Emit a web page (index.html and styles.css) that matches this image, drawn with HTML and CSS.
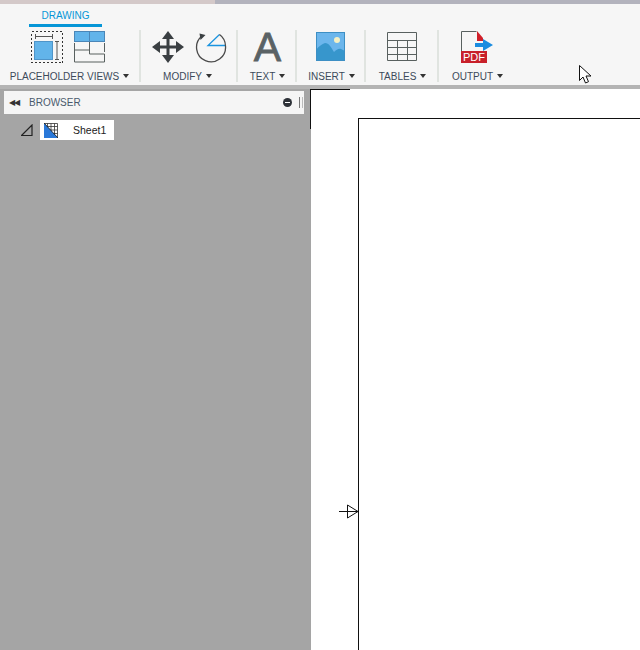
FILE: index.html

```html
<!DOCTYPE html>
<html lang="en">
<head>
    <meta charset="UTF-8">
    <title>Drawing workspace</title>
    <link rel="stylesheet" href="styles.css">
</head>
<body>
    <div class="title-strip">
        <div class="strip-left"></div>
        <div class="strip-right"></div>
    </div>
    <header class="ribbon">
        <div class="group group-views">
            <div class="tab">DRAWING</div>
            <div class="icons icons-views">
                <svg width="33" height="33" viewBox="0 0 33 33">
                    <rect x=".5" y=".5" width="31" height="31" fill="none" stroke="#333" stroke-dasharray="2 2" shape-rendering="crispEdges"/>
                    <path d="M4.500 3v5M21.500 3v5M5 5.500h16" stroke="#555" fill="none"/>
                    <rect x="3.500" y="10.500" width="18" height="18" fill="#62b4ea" stroke="#4f94c8"/>
                    <path d="M26 10v19M24 10.500h4M24 28.500h4" stroke="#555" fill="none"/>
                </svg>
                <svg width="32" height="33" viewBox="0 0 32 33">
                    <rect x=".5" y=".5" width="30" height="10" fill="#62b4ea" stroke="#4a86b8"/>
                    <path d="M15.500 .5v10" stroke="#4a86b8"/>
                    <path d="M.5 12v7M30.500 12v9M15.500 11v8H.5v12h30v-8h-15v-4" fill="none" stroke="#58605f"/>
                </svg>
            </div>
            <div class="label">PLACEHOLDER VIEWS<span class="caret"></span></div>
        </div>
        <div class="group group-modify">
            <div class="icons icons-modify">
                <svg width="32" height="32" viewBox="0 0 32 32">
                    <path d="M16 0l6 8h-4.500v6.500H24V10l8 6-8 6v-4.500h-6.500V24H22l-6 8-6-8h4.500v-6.500H8V22l-8-6 8-6v4.500h6.500V8H10z" fill="#3a3f42"/>
                </svg>
                <svg width="32" height="32" viewBox="0 0 32 32">
                    <path d="M30.500 15A14.500 14.500 0 1 1 7 5" fill="none" stroke="#4a4a4a" stroke-width="1.300"/>
                    <path d="M4.500 2.500l6 1.500-5 5z" fill="#3a3f42"/>
                    <path d="M30 14.500H13L24.500 3.500" fill="none" stroke="#1a94e0" stroke-width="1.300"/>
                    <path d="M24.500 3.500A14.500 14.500 0 0 1 30.500 15" fill="none" stroke="#4a4a4a" stroke-width="1.300"/>
                </svg>
            </div>
            <div class="label">MODIFY<span class="caret"></span></div>
        </div>
        <div class="group group-text">
            <div class="icons">
                <div class="big-a">A</div>
            </div>
            <div class="label">TEXT<span class="caret"></span></div>
        </div>
        <div class="group group-insert">
            <div class="icons icons-nudged">
                <svg width="29" height="29" viewBox="0 0 29 29">
                    <rect width="29" height="29" fill="#6cb6ec"/>
                    <circle cx="21" cy="8" r="3" fill="#f5f0c4"/>
                    <path d="M0 29V18c3-4 6-6 9-7 4 0 6 4 9 9 2-2 5-4 7-3l4 2v10z" fill="#3796cc"/>
                    <rect x="0.500" y="0.500" width="28" height="28" fill="none" stroke="#3d8fc4"/>
                </svg>
            </div>
            <div class="label">INSERT<span class="caret"></span></div>
        </div>
        <div class="group group-tables">
            <div class="icons icons-nudged">
                <svg width="30" height="29" viewBox="0 0 30 29">
                    <path d="M.5 .5h29v28H.5zM.5 8.500h29M.5 15.500h29M.5 22.500h29M10.500 8.500v20M20.500 8.500v20" fill="none" stroke="#58605f"/>
                </svg>
            </div>
            <div class="label">TABLES<span class="caret"></span></div>
        </div>
        <div class="group group-output">
            <div class="icons">
                <div class="pdf">
                    <svg class="pdf-page" width="33" height="32" viewBox="0 0 33 32">
                        <path d="M.5 20V.5h15" fill="none" stroke="#58605f"/>
                        <path d="M16 0l6 7v3h-6z" fill="#d0202a"/>
                        <path d="M14 12h8V8l10 6-10 6v-4h-8z" fill="#1a8ce0"/>
                    </svg>
                    <div class="pdf-tag">PDF</div>
                </div>
            </div>
            <div class="label">OUTPUT<span class="caret"></span></div>
        </div>
    </header>
    <main class="workspace">
        <aside class="sidebar">
            <div class="browser-bar">
                <span class="collapse">&#9664;&#9664;</span>
                <span class="browser-title">BROWSER</span>
                <span class="minus"></span>
                <span class="grip"></span>
            </div>
            <div class="tree-row">
                <svg width="12" height="12" viewBox="0 0 12 12">
                    <path d="M.5 11.500L11 1v10.500z" fill="none" stroke="#222" stroke-width="1.200"/>
                </svg>
                <div class="sheet-chip">
                    <svg width="14" height="15" viewBox="0 0 14 15">
                        <rect width="14" height="15" fill="#fff"/>
                        <path d="M.5 .5h13v14H.5zM3.500 .5v14M7 .5v14M10.500 .5v14M.5 3.500h13M.5 7h13M.5 10.500h13" fill="none" stroke="#333" stroke-width=".8"/>
                        <path d="M0 0l14 15H0z" fill="#2a78d8"/>
                        <path d="M0 0l14 15" fill="none" stroke="#111" stroke-width=".8"/>
                    </svg>
                    <span>Sheet1</span>
                </div>
            </div>
        </aside>
        <section class="canvas">
            <div class="view-corner"></div>
            <div class="sheet"></div>
            <svg class="center-mark" width="21" height="17" viewBox="0 0 21 17">
                <path d="M0 8.500h19M8.500 2L19 8.500 8.500 15z" fill="none" stroke="#111"/>
            </svg>
        </section>
    </main>
    <svg class="cursor" width="14" height="19" viewBox="0 0 14 19">
        <path d="M.5 .5v15l3.500-3.500 2.500 6 3-1.300-2.500-5.700h5z" fill="#fff" stroke="#111"/>
    </svg>
</body>
</html>
```

FILE: styles.css

```css
/* Base */
html, body {
    margin: 0;
    padding: 0;
    height: 650px;
    overflow: hidden;
}

body {
    position: relative;
    font-family: "Liberation Sans", Arial, sans-serif;
    background-color: #b4b4b4;
    color: #3c4a5a;
}

/* Title strip */
.title-strip {
    display: flex;
    height: 4px;
}

.strip-left {
    width: 215px;
    background-color: #d4c9c9;
}

.strip-right {
    flex: 1;
    background-color: #b3b3bd;
}

/* Ribbon */
.ribbon {
    display: flex;
    height: 81px;
    background-color: #f6f6f6;
}

.group {
    position: relative;
    display: flex;
    flex-direction: column;
    align-items: center;
    justify-content: flex-end;
    padding-bottom: 2px;
    box-sizing: border-box;
}

.group::after {
    content: "";
    position: absolute;
    right: 0;
    top: 26px;
    bottom: 3px;
    width: 2px;
    background-color: #e0e4e0;
}

.group-views { width: 141px; padding-right: 2px; }
.group-modify { width: 97px; padding-right: 4px; }
.group-text { width: 59px; }
.group-insert { width: 69px; }
.group-tables { width: 73px; }
.group-output { width: 79px; padding-right: 2px; }
.group-output::after { display: none; }

.tab {
    align-self: flex-start;
    width: 73px;
    margin-left: 29px;
    margin-bottom: 3px;
    padding-bottom: 2px;
    border-bottom: 3px solid #0696d7;
    color: #0696d7;
    font-size: 10px;
    line-height: 13px;
    text-align: center;
}

.icons {
    display: flex;
    align-items: center;
    justify-content: center;
    height: 34px;
    margin-bottom: 6px;
    box-sizing: border-box;
}

.icons-views {
    gap: 10px;
    margin-left: -3px;
}

.icons-modify {
    gap: 11px;
    margin-left: 4px;
}

.icons-nudged {
    padding-bottom: 2px;
    margin-left: -2px;
}

.label {
    font-size: 10px;
    line-height: 13px;
    white-space: nowrap;
}

.caret {
    display: inline-block;
    margin-left: 4px;
    vertical-align: 2px;
    border-left: 3px solid transparent;
    border-right: 3px solid transparent;
    border-top: 4px solid #333;
}

.big-a {
    font-size: 41px;
    line-height: 34px;
    color: #5a6265;
    -webkit-text-stroke: 0.8px #5a6265;
}

/* PDF icon */
.pdf {
    position: relative;
    width: 33px;
    height: 32px;
}

.pdf-page {
    display: block;
}

.pdf-tag {
    position: absolute;
    left: 0;
    bottom: 0;
    width: 26px;
    height: 12px;
    background-color: #c8202a;
    color: #fff;
    font-size: 11px;
    line-height: 12px;
    text-align: center;
}

/* Workspace */
.workspace {
    display: flex;
    height: 565px;
    padding-top: 4px;
    box-sizing: border-box;
}

.sidebar {
    width: 311px;
    background-color: #a5a5a5;
    padding: 2px 7px 0 4px;
    box-sizing: border-box;
}

.browser-bar {
    display: flex;
    align-items: center;
    height: 23px;
    padding-bottom: 1px;
    box-sizing: border-box;
    background-color: #f5f5f5;
    font-size: 10px;
    color: #4a5a6c;
}

.collapse {
    width: 25px;
    padding-left: 5px;
    box-sizing: border-box;
    font-size: 8px;
    letter-spacing: -1px;
    color: #333;
}

.browser-title {
    flex: 1;
}

.minus {
    position: relative;
    width: 9px;
    height: 9px;
    border-radius: 50%;
    background-color: #2e3238;
    margin-right: 7px;
}

.minus::after {
    content: "";
    position: absolute;
    left: 2px;
    right: 2px;
    top: 4px;
    height: 1px;
    background-color: #fff;
}

.grip {
    width: 2px;
    height: 11px;
    margin-right: 1px;
    border-left: 1px solid #777;
    border-right: 1px solid #bbb;
}

.tree-row {
    display: flex;
    align-items: center;
    gap: 7px;
    margin-top: 6px;
    padding-left: 17px;
}

.sheet-chip {
    display: flex;
    align-items: center;
    gap: 15px;
    width: 74px;
    height: 20px;
    padding-left: 4px;
    box-sizing: border-box;
    background-color: #fff;
    font-size: 10.5px;
    color: #222;
}

/* Canvas */
.canvas {
    position: relative;
    flex: 1;
    background-color: #fff;
    padding: 29px 0 0 47px;
}

.view-corner {
    position: absolute;
    left: -1px;
    top: 0;
    width: 39px;
    height: 39px;
    border-top: 1px solid #111;
    border-left: 1px solid #111;
}

.sheet {
    height: 100%;
    border-top: 1px solid #111;
    border-left: 1px solid #111;
}

.center-mark {
    position: absolute;
    left: 28px;
    top: 414px;
}

.cursor {
    position: absolute;
    left: 579px;
    top: 65px;
}
```
